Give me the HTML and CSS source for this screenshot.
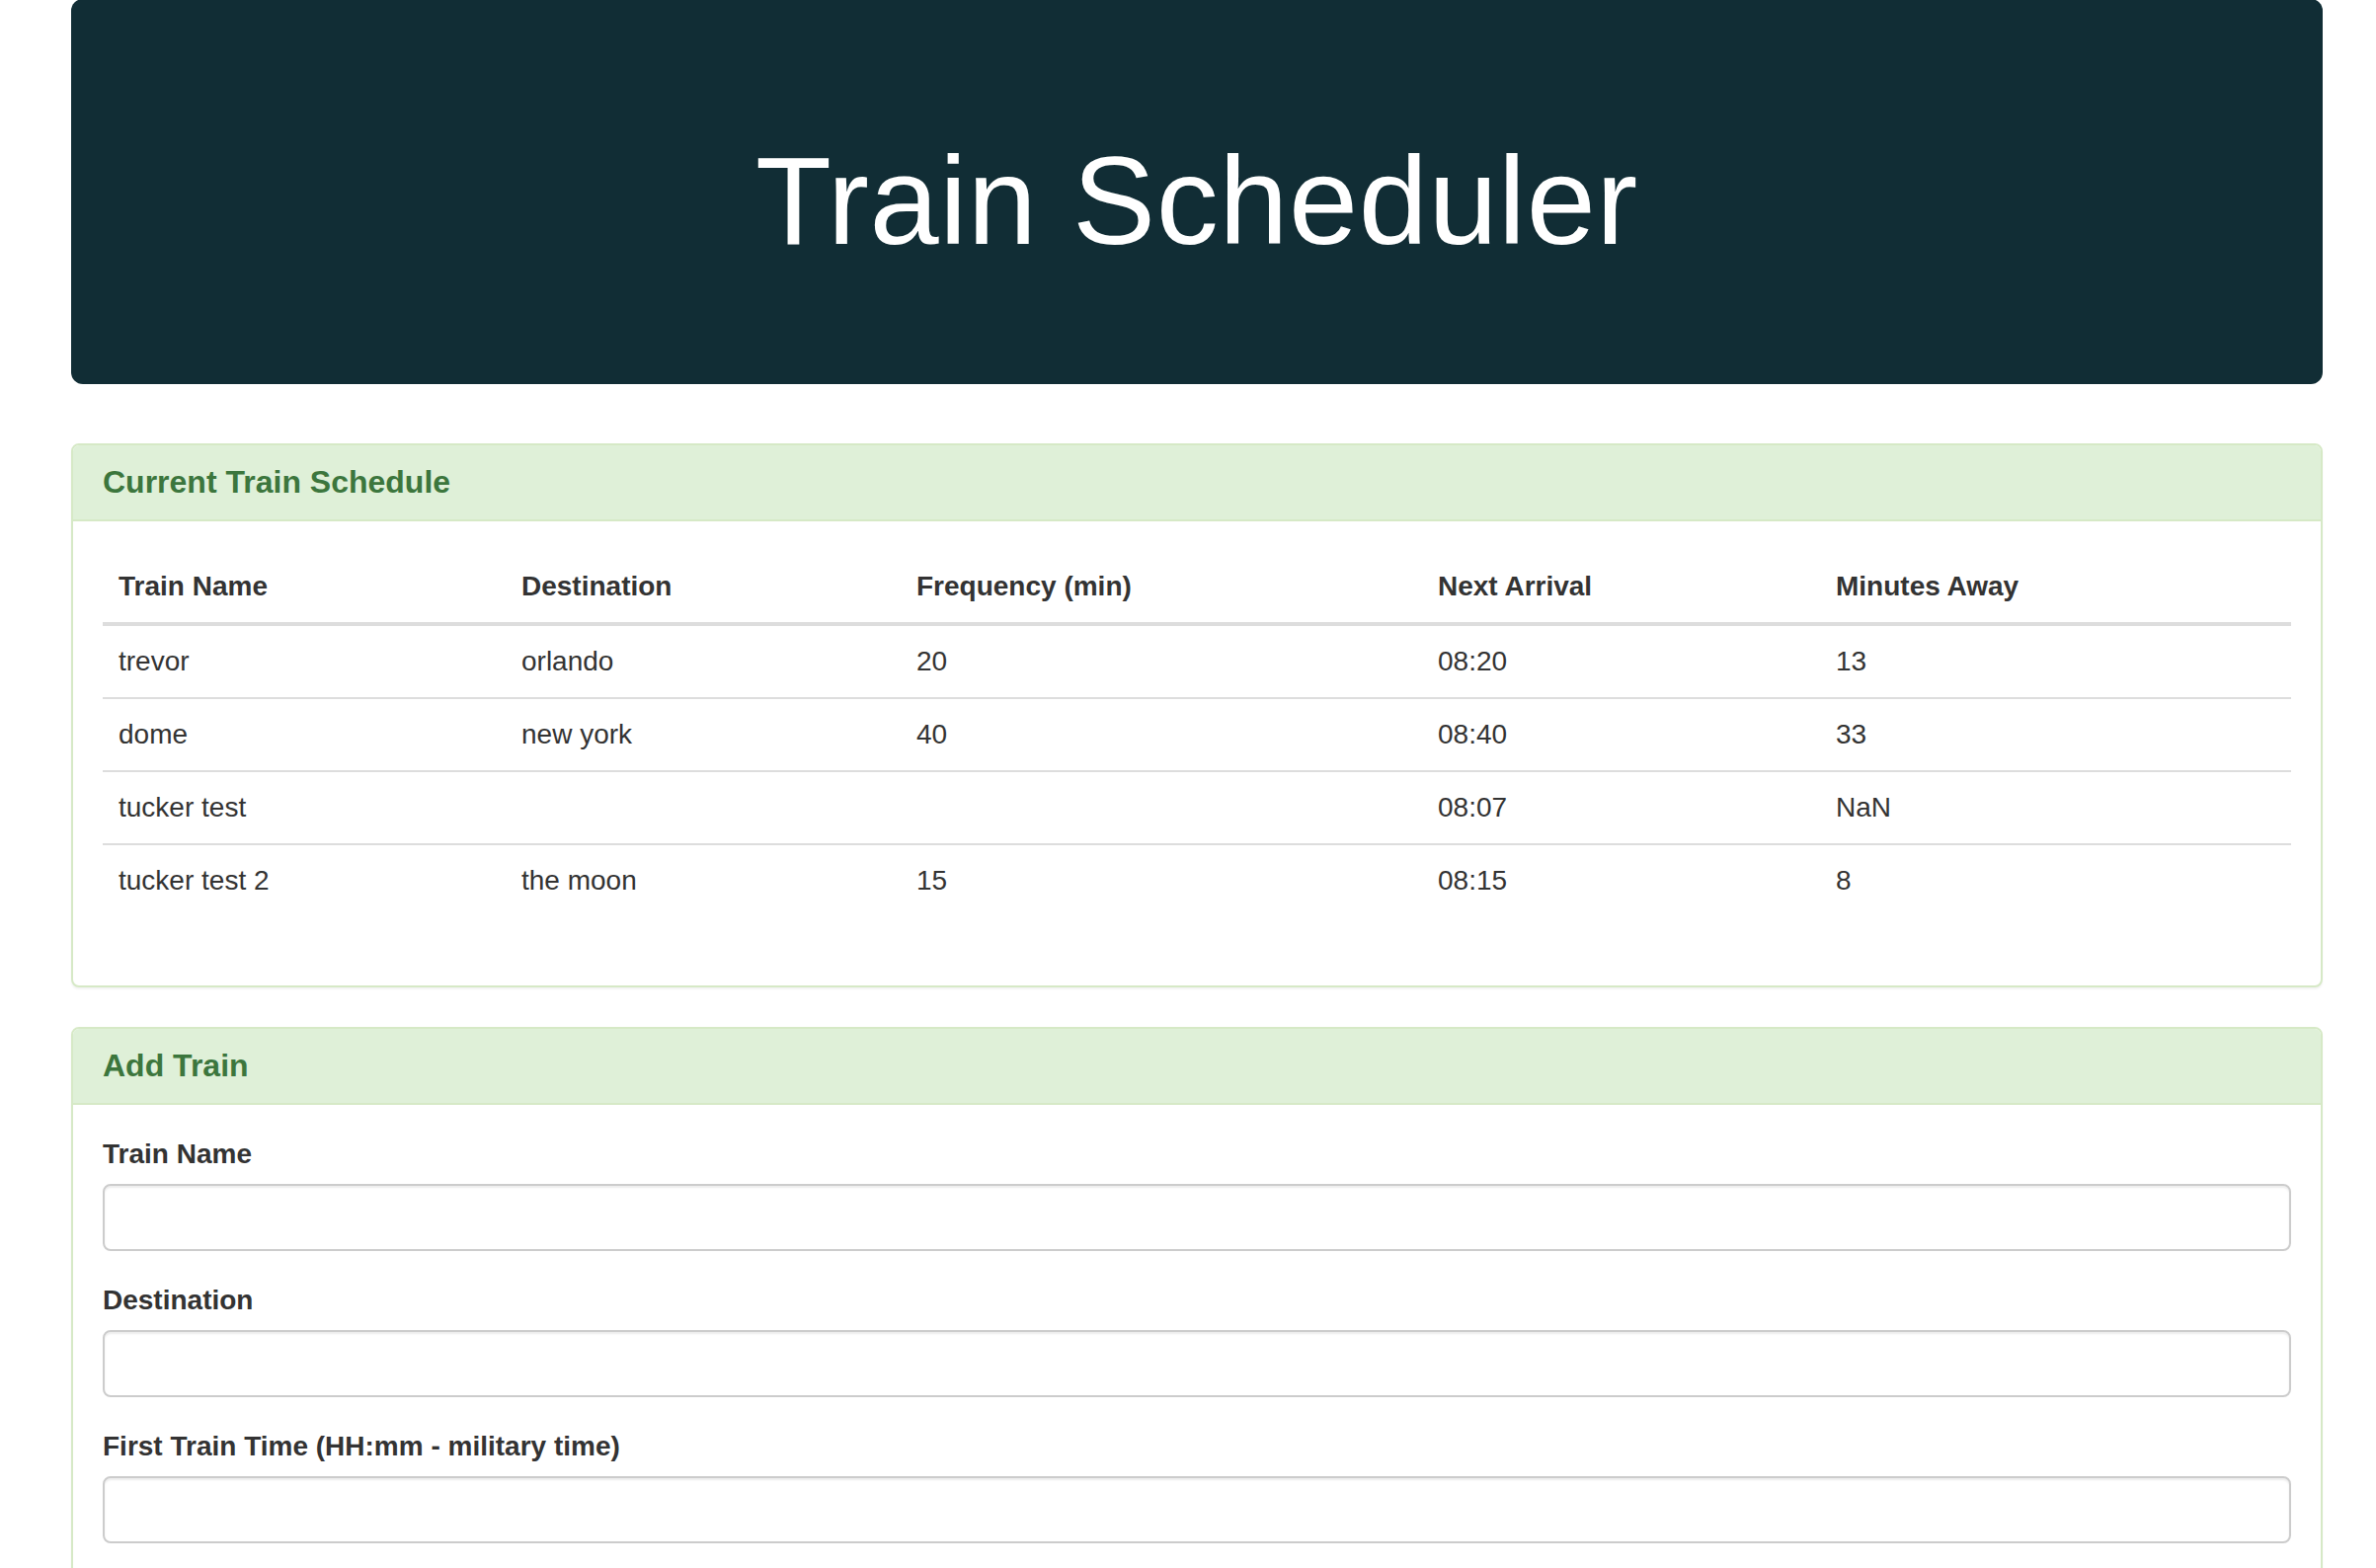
FILE: index.html
```html
<!DOCTYPE html>
<html lang="en">
<head>
<meta charset="utf-8">
<title>Train Scheduler</title>
<link rel="stylesheet" href="styles.css">
</head>
<body>
<div class="container">
  <div class="jumbotron">
    <h1 class="title">Train Scheduler</h1>
  </div>

  <div class="panel">
    <div class="panel-heading">
      <h3 class="panel-title">Current Train Schedule</h3>
    </div>
    <div class="panel-body">
      <table class="table">
        <colgroup>
          <col class="c1"><col class="c2"><col class="c3"><col class="c4"><col class="c5">
        </colgroup>
        <thead>
          <tr>
            <th>Train Name</th>
            <th>Destination</th>
            <th>Frequency (min)</th>
            <th>Next Arrival</th>
            <th>Minutes Away</th>
          </tr>
        </thead>
        <tbody>
          <tr><td>trevor</td><td>orlando</td><td>20</td><td>08:20</td><td>13</td></tr>
          <tr><td>dome</td><td>new york</td><td>40</td><td>08:40</td><td>33</td></tr>
          <tr><td>tucker test</td><td></td><td></td><td>08:07</td><td>NaN</td></tr>
          <tr><td>tucker test 2</td><td>the moon</td><td>15</td><td>08:15</td><td>8</td></tr>
        </tbody>
      </table>
    </div>
  </div>

  <div class="panel">
    <div class="panel-heading">
      <h3 class="panel-title">Add Train</h3>
    </div>
    <div class="panel-body">
      <form class="form">
        <div class="form-group">
          <label class="label" for="train-name">Train Name</label>
          <input class="form-control" id="train-name" type="text">
        </div>
        <div class="form-group">
          <label class="label" for="destination">Destination</label>
          <input class="form-control" id="destination" type="text">
        </div>
        <div class="form-group">
          <label class="label" for="first-time">First Train Time (HH:mm - military time)</label>
          <input class="form-control" id="first-time" type="text">
        </div>
      </form>
    </div>
  </div>
</div>
</body>
</html>
```

FILE: styles.css
```css
* {
  box-sizing: border-box;
}

html, body {
  margin: 0;
  padding: 0;
  background: #ffffff;
}

body {
  font-family: "Liberation Sans", Arial, Helvetica, sans-serif;
  font-size: 28px;
  line-height: 1.42857;
  color: #333333;
}

.container {
  width: 2280px;
  margin-left: 72px;
}

.jumbotron {
  margin-top: -1px;
  margin-bottom: 60px;
  padding: 96px 120px 95px;
  background: #112d35;
  border-radius: 12px;
  text-align: center;
}

.title {
  margin: 40px 0 20px;
  font-size: 126px;
  line-height: 1.1;
  font-weight: 500;
  letter-spacing: 0.6px;
  color: #ffffff;
}

.panel {
  margin-bottom: 40px;
  background: #ffffff;
  border: 2px solid #d6e9c6;
  border-radius: 8px;
  box-shadow: 0 2px 2px rgba(0, 0, 0, 0.05);
}

.panel-heading {
  padding: 20px 30px;
  background: #dff0d8;
  border-bottom: 2px solid #d6e9c6;
  border-radius: 6px 6px 0 0;
}

.panel-title {
  margin: 0;
  font-size: 32px;
  line-height: 1.1;
  font-weight: 700;
  color: #3c763d;
}

.panel-body {
  padding: 30px;
}

.table {
  width: 100%;
  margin-bottom: 40px;
  border-collapse: collapse;
  border-spacing: 0;
  table-layout: fixed;
}

.c1 { width: 408px; }
.c2 { width: 400px; }
.c3 { width: 528px; }
.c4 { width: 403px; }
.c5 { width: auto; }

.table th,
.table td {
  padding: 16px;
  line-height: 40px;
  text-align: left;
  vertical-align: top;
}

.table th {
  font-weight: 700;
  vertical-align: bottom;
  border-bottom: 4px solid #dddddd;
}

.table td {
  border-top: 2px solid #dddddd;
}

.table tbody tr:first-child td {
  border-top: 0;
}

.form-group {
  margin-bottom: 30px;
}

.label {
  display: inline-block;
  max-width: 100%;
  margin-bottom: 10px;
  font-weight: 700;
  line-height: 40px;
}

.form-control {
  display: block;
  width: 100%;
  height: 68px;
  padding: 12px 24px;
  font-family: inherit;
  font-size: 28px;
  line-height: 1.42857;
  color: #555555;
  background: #ffffff;
  border: 2px solid #cccccc;
  border-radius: 8px;
  box-shadow: inset 0 2px 2px rgba(0, 0, 0, 0.075);
  outline: none;
}
```
